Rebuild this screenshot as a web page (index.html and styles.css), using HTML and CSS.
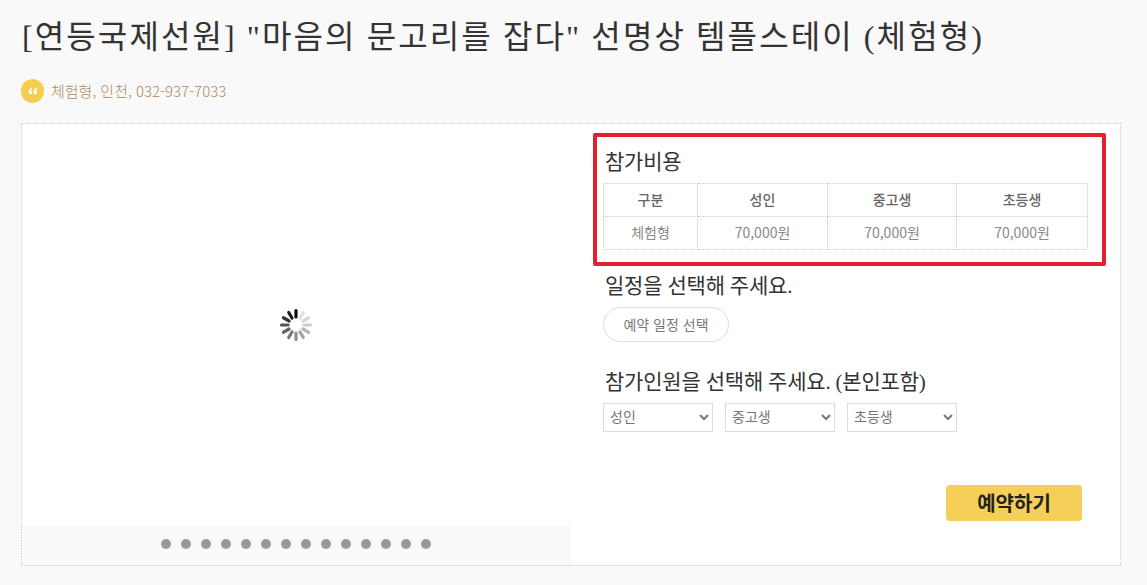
FILE: index.html
```html
<!DOCTYPE html>
<html lang="ko">
<head>
    <meta charset="UTF-8">
    <meta name="viewport" content="width=device-width, initial-scale=1.0">
    <title>템플스테이 예약</title>
    <link rel="stylesheet" href="styles.css">
</head>
<body>
    <div class="page">
        <h1 class="page-title">[연등국제선원] "마음의 문고리를 잡다" 선명상 템플스테이 (체험형)</h1>

        <div class="meta">
            <span class="meta-icon">
                <svg width="10" height="8" viewBox="0 0 12 10">
                    <path fill="#fff" d="M5 0.5C2.4 1.2 0.6 3 0.6 5.6 0.6 7.8 1.6 9 3 9 4.2 9 5 8.2 5 7 5 5.8 4.2 5.1 3.1 5.1 3.1 3.9 3.9 2.8 5 2.2Z"/>
                    <path fill="#fff" d="M11.2 0.5C8.6 1.2 6.8 3 6.8 5.6 6.8 7.8 7.8 9 9.2 9 10.4 9 11.2 8.2 11.2 7 11.2 5.8 10.4 5.1 9.3 5.1 9.3 3.9 10.1 2.8 11.2 2.2Z"/>
                </svg>
            </span>
            <span class="meta-text">체험형, 인천, 032-937-7033</span>
        </div>

        <div class="card">
            <div class="gallery">
                <div class="gallery-main">
                    <svg class="spinner" width="34" height="34" viewBox="-17 -17 34 34">
                        <g stroke="#000" stroke-width="3.2" stroke-linecap="round">
                            <line x1="0" y1="-8" x2="0" y2="-14.5" opacity="0.95"/>
                            <line x1="0" y1="-8" x2="0" y2="-14.5" opacity="0.88" transform="rotate(-30)"/>
                            <line x1="0" y1="-8" x2="0" y2="-14.5" opacity="0.78" transform="rotate(-60)"/>
                            <line x1="0" y1="-8" x2="0" y2="-14.5" opacity="0.68" transform="rotate(-90)"/>
                            <line x1="0" y1="-8" x2="0" y2="-14.5" opacity="0.6" transform="rotate(-120)"/>
                            <line x1="0" y1="-8" x2="0" y2="-14.5" opacity="0.52" transform="rotate(-150)"/>
                            <line x1="0" y1="-8" x2="0" y2="-14.5" opacity="0.44" transform="rotate(180)"/>
                            <line x1="0" y1="-8" x2="0" y2="-14.5" opacity="0.36" transform="rotate(150)"/>
                            <line x1="0" y1="-8" x2="0" y2="-14.5" opacity="0.28" transform="rotate(120)"/>
                            <line x1="0" y1="-8" x2="0" y2="-14.5" opacity="0.2" transform="rotate(90)"/>
                            <line x1="0" y1="-8" x2="0" y2="-14.5" opacity="0.15" transform="rotate(60)"/>
                            <line x1="0" y1="-8" x2="0" y2="-14.5" opacity="0.12" transform="rotate(30)"/>
                        </g>
                    </svg>
                </div>
                <div class="pager">
                    <span class="dot"></span><span class="dot"></span><span class="dot"></span><span class="dot"></span>
                    <span class="dot"></span><span class="dot"></span><span class="dot"></span><span class="dot"></span>
                    <span class="dot"></span><span class="dot"></span><span class="dot"></span><span class="dot"></span>
                    <span class="dot"></span><span class="dot"></span>
                </div>
            </div>

            <div class="booking">
                <div class="fee-box">
                    <h2 class="section-title fee-title">참가비용</h2>
                    <table class="fee-table">
                        <colgroup>
                            <col class="col-kind">
                            <col class="col-adult">
                            <col class="col-teen">
                            <col class="col-child">
                        </colgroup>
                        <tr>
                            <th>구분</th>
                            <th>성인</th>
                            <th>중고생</th>
                            <th>초등생</th>
                        </tr>
                        <tr>
                            <td>체험형</td>
                            <td>70,000원</td>
                            <td>70,000원</td>
                            <td>70,000원</td>
                        </tr>
                    </table>
                </div>

                <h2 class="section-title date-title">일정을 선택해 주세요.</h2>
                <button class="date-btn" type="button">예약 일정 선택</button>

                <h2 class="section-title people-title">참가인원을 선택해 주세요. (본인포함)</h2>
                <div class="people-row">
                    <select class="people-select"><option>성인</option></select>
                    <select class="people-select"><option>중고생</option></select>
                    <select class="people-select"><option>초등생</option></select>
                </div>

                <button class="reserve-btn" type="button">예약하기</button>
            </div>
        </div>
    </div>
</body>
</html>
```

FILE: styles.css
```css
* {
    box-sizing: border-box;
}

html, body {
    margin: 0;
    padding: 0;
}

body {
    background-color: #f9f9f9;
    color: #333;
    font-family: "Noto Sans CJK KR", "Noto Sans", sans-serif;
}

.page {
    height: 585px;
    padding: 16px 26px 19px 21px;
    display: flex;
    flex-direction: column;
    overflow: hidden;
}

.page-title {
    margin: 0 0 0 1px;
    font-family: "Liberation Serif", "Noto Sans CJK KR", serif;
    font-size: 32px;
    font-weight: 400;
    line-height: 42px;
    letter-spacing: 2.1px;
    color: #333;
    white-space: nowrap;
}

.meta {
    display: flex;
    align-items: center;
    gap: 7px;
    margin-top: 21px;
    height: 24px;
    font-size: 15px;
    font-weight: 300;
    color: #ae8859;
}

.meta-text {
    padding-bottom: 2px;
}

.meta-icon {
    width: 23px;
    height: 24px;
    border-radius: 50%;
    background-color: #f5cd4f;
    display: flex;
    align-items: center;
    justify-content: center;
}

.card {
    flex: 1;
    margin-top: 20px;
    display: flex;
    background-color: #fff;
    border: 1px dotted #ccc;
}

.gallery {
    flex: 0 0 549px;
    display: flex;
    flex-direction: column;
}

.gallery-main {
    flex: 1;
    padding-right: 1px;
    display: flex;
    align-items: center;
    justify-content: center;
}

.pager {
    height: 40px;
    padding: 0 1px 2px 0;
    background-color: #f9f9f9;
    display: flex;
    align-items: center;
    justify-content: center;
    gap: 10px;
}

.dot {
    width: 10px;
    height: 10px;
    border-radius: 50%;
    background-color: #999;
}

.booking {
    flex: 1;
    min-width: 0;
    display: flex;
    flex-direction: column;
    padding: 9px 14px 0 22px;
}

.fee-box {
    border: 4px solid #e0222f;
    border-radius: 2px;
    padding: 11px 10px 12px 6px;
}

.section-title {
    margin: 0;
    font-family: "Liberation Serif", "Noto Sans CJK KR", serif;
    font-size: 21px;
    font-weight: 400;
    line-height: 28px;
    letter-spacing: -0.2px;
    color: #333;
    white-space: nowrap;
    padding-left: 2px;
}

.fee-title {
    margin-bottom: 7px;
}

.fee-table {
    width: 484px;
    border-collapse: collapse;
    table-layout: fixed;
}

.col-kind {
    width: 94px;
}

.col-adult {
    width: 130px;
}

.col-teen {
    width: 129px;
}

.col-child {
    width: 131px;
}

.fee-table th,
.fee-table td {
    height: 33px;
    padding: 0 0 2px;
    border: 1px dotted #ccc;
    font-size: 14px;
    text-align: center;
}

.fee-table th {
    font-weight: 500;
    color: #666;
}

.fee-table td {
    font-weight: 400;
    color: #888;
}

.date-title {
    margin-top: 6px;
    margin-left: 10px;
}

.date-btn {
    align-self: flex-start;
    margin-top: 7px;
    margin-left: 10px;
    width: 126px;
    height: 35px;
    padding-bottom: 3px;
    background-color: #fff;
    border: 1px solid #ddd;
    border-radius: 18px;
    font-family: inherit;
    font-size: 14px;
    color: #777;
}

.people-title {
    margin-top: 26px;
    margin-left: 10px;
}

.people-row {
    display: flex;
    gap: 12px;
    margin-top: 7px;
    margin-left: 10px;
}

.people-select {
    width: 110px;
    height: 29px;
    padding: 0 0 3px 2px;
    background-color: #fff;
    border: 1px solid #ddd;
    border-radius: 0;
    font-family: inherit;
    font-size: 14px;
    color: #777;
}

.reserve-btn {
    align-self: flex-end;
    margin-top: 53px;
    margin-right: 24px;
    width: 136px;
    height: 36px;
    padding-bottom: 3px;
    background-color: #f5cf58;
    border: 0;
    border-radius: 4px;
    font-family: inherit;
    font-size: 20px;
    font-weight: 700;
    color: #222;
}
```
